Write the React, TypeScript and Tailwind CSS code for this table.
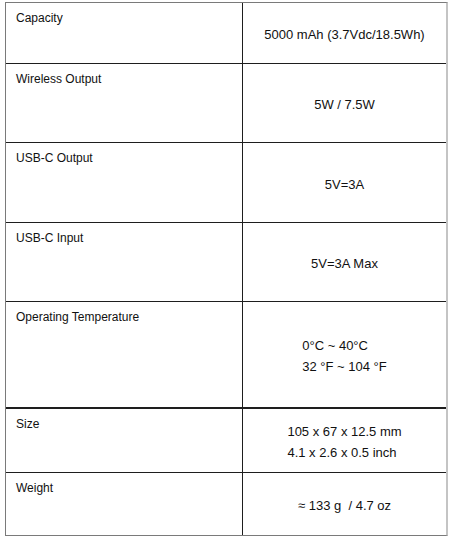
const specs = [
  { label: "Capacity", value: ["5000 mAh (3.7Vdc/18.5Wh)"], h: "h-[61px]", line: "border-b border-[#1e1e1e]" },
  { label: "Wireless Output", value: ["5W / 7.5W"], h: "h-[79px]", line: "border-b border-[#1e1e1e]" },
  { label: "USB-C Output", value: ["5V=3A"], h: "h-[80px]", line: "border-b border-[#1e1e1e]" },
  { label: "USB-C Input", value: ["5V=3A Max"], h: "h-[79px]", line: "border-b border-[#1e1e1e]" },
  { label: "Operating Temperature", value: ["0°C ~ 40°C", "32 °F ~ 104 °F"], h: "h-[107px]", line: "border-b-2 border-[#1e1e1e]" },
  { label: "Size", value: ["105 x 67 x 12.5 mm", "4.1 x 2.6 x 0.5 inch"], h: "h-[64px]", line: "border-b border-[#1e1e1e]" },
  { label: "Weight", value: ["≈ 133 g  / 4.7 oz"], h: "h-[62px]", line: "" }
];

const SpecRow = ({ label, value, h, line }: { label: string; value: string[]; h: string; line: string }) => {
  return (
    <div className={`flex ${h} ${line}`}>
      <div className="w-[237px] shrink-0 border-r border-[#1e1e1e] pl-[10px] pt-[7px] text-[12px] leading-[16px]">
        {label}
      </div>
      <div className="flex flex-1 items-center justify-center pt-[3px] text-[13px] leading-[21px]">
        <div className="whitespace-pre">
          {value.map((v) => (
            <div key={v}>{v}</div>
          ))}
        </div>
      </div>
    </div>
  );
};

export default function App() {
  return (
    <div
      className="min-h-[546px] bg-white pt-[2px] pl-[5px] text-[#111]"
      style={{ fontFamily: '"Liberation Sans", Arial, sans-serif' }}
    >
      <div className="w-[443px] border-l border-t border-b border-[#7a7a7a] border-r-2 border-r-[#c4c4c4]">
        {specs.map((s) => (
          <SpecRow key={s.label} {...s} />
        ))}
      </div>
    </div>
  );
}
